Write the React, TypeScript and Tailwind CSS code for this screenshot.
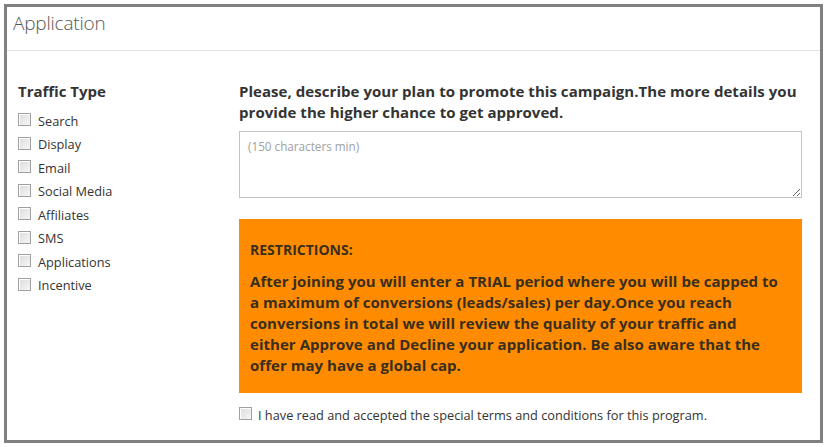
const traffic = ["Search", "Display", "Email", "Social Media", "Affiliates", "SMS", "Applications", "Incentive"];

function Box() {
  return (
    <span className="inline-block w-[13px] h-[13px] shrink-0 border border-[#a0a0a0] bg-gradient-to-br from-[#dcdcdc] to-[#f6f6f6] shadow-[inset_1px_1px_0_#fff]" />
  );
}

export default function App() {
  return (
    <div className="w-[828px] h-[447px] bg-white pt-[4px] pl-[4px] font-['Open_Sans',sans-serif] text-[#333]">
      <div className="w-[819px] h-[439px] border-[3px] border-[#808080] flex flex-col">
        {/* header */}
        <div className="h-[44px] border-b border-[#e3e3e3] pl-[6px] flex items-center">
          <h2 className="text-[19px] font-light text-[#555] leading-none pb-[10px] tracking-[-0.2px]">Application</h2>
        </div>

        <div className="flex pl-[11px] pt-[30px]">
          {/* traffic type */}
          <div className="w-[221px] shrink-0">
            <h3 className="text-[15px] font-bold leading-[21px] text-[#333]">Traffic Type</h3>
            <ul className="mt-[6px]">
              {traffic.map((t) => (
                <li key={t} className="h-[23.5px] flex items-center gap-[7px] text-[12.75px]">
                  <Box />
                  <span className="pt-[3px]">{t}</span>
                </li>
              ))}
            </ul>
          </div>

          {/* plan */}
          <div className="w-[563px]">
            <p className="text-[15px] font-bold leading-[21px] tracking-[0.05px]">
              Please, describe your plan to promote this campaign.The more details you provide the higher chance to get approved.
            </p>
            <textarea
              className="mt-[8px] block w-[563px] h-[67px] border border-[#c4c4c4] px-[8px] py-[6px] text-[11.7px] placeholder:text-[#a0a0a0] outline-none resize-y"
              placeholder="(150 characters min)"
            />
            <div className="mt-[21px] bg-[#ff8c00] pt-[20px] pb-[17px] pl-[11px] pr-[10px] text-[#3a2e1e] font-bold">
              <p className="text-[14px] leading-[21px]">RESTRICTIONS:</p>
              <p className="mt-[11px] text-[15px] leading-[21px] tracking-[0.04px]">
                After joining you will enter a TRIAL period where you will be capped to
                <br />
                a maximum of conversions (leads/sales) per day.Once you reach
                <br />
                conversions in total we will review the quality of your traffic and
                <br />
                either Approve and Decline your application. Be also aware that the
                <br />
                offer may have a global cap.
              </p>
            </div>
            <label className="mt-[8px] flex items-center gap-[6px] text-[12.75px]">
              <Box />
              <span className="pt-[5px]">I have read and accepted the special terms and conditions for this program.</span>
            </label>
          </div>
        </div>
      </div>
    </div>
  );
}
